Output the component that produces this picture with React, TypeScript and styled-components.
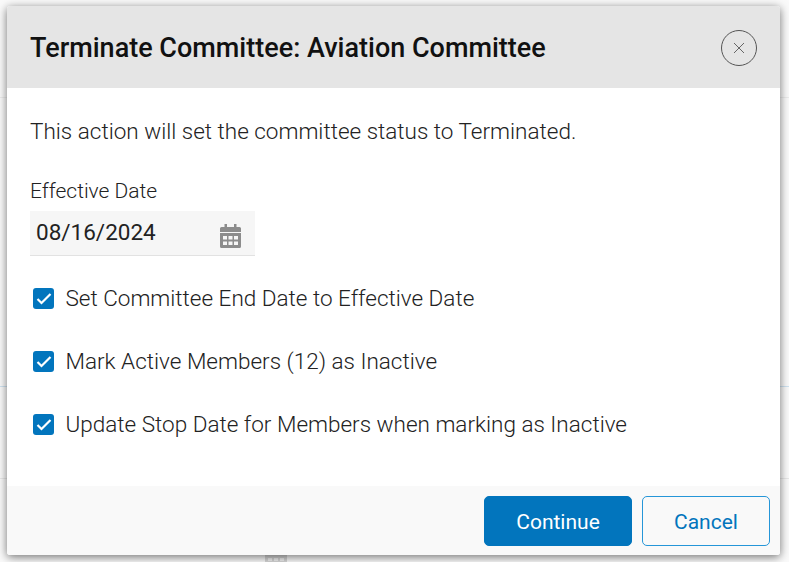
import React from "react";
import styled, { createGlobalStyle } from "styled-components";

const GlobalStyle = createGlobalStyle`
  html, body {
    margin: 0;
    padding: 0;
    width: 789px;
    height: 562px;
    overflow: hidden;
    background: #fafafa;
    font-family: Roboto, "Liberation Sans", sans-serif;
  }
`;

const Page = styled.div`
  position: relative;
  width: 789px;
  height: 562px;
  overflow: hidden;
  background: #fafafa;
`;

const Backdrop = styled.div`
  position: absolute;
  inset: 0;
`;

const BackdropLine = styled.div<{ $top: number; $color: string }>`
  position: absolute;
  left: 0;
  right: 0;
  top: ${({ $top }) => $top}px;
  height: 1px;
  background: ${({ $color }) => $color};
`;

const BackdropGlyph = styled.svg`
  position: absolute;
  left: 265px;
  top: 555px;
`;

const Modal = styled.div`
  position: absolute;
  left: 7px;
  top: 6px;
  width: 773px;
  height: 549px;
  display: flex;
  flex-direction: column;
  background: #fff;
  border-radius: 3px;
  overflow: hidden;
  box-shadow: 0 2px 10px rgba(0, 0, 0, 0.55);
`;

const Header = styled.header`
  flex: 0 0 82px;
  box-sizing: border-box;
  display: flex;
  align-items: center;
  justify-content: space-between;
  padding: 2px 23px 0;
  background: #e5e5e5;
`;

const Title = styled.h1`
  margin: 0;
  font-size: 27px;
  line-height: 32px;
  font-weight: 500;
  color: #111;
`;

const CloseButton = styled.button`
  width: 36px;
  height: 36px;
  padding: 0;
  display: flex;
  align-items: center;
  justify-content: center;
  background: transparent;
  border: 1px solid #555;
  border-radius: 50%;
  color: #555;
`;

const Body = styled.div`
  flex: 1;
  display: flex;
  flex-direction: column;
  padding: 28px 23px 0;
`;

const Intro = styled.p`
  margin: 0;
  font-size: 22.5px;
  line-height: 30px;
  font-weight: 300;
  color: #222;
`;

const Label = styled.label`
  margin-top: 32px;
  font-size: 21px;
  line-height: 26px;
  font-weight: 300;
  color: #222;
`;

const DateField = styled.div`
  margin-top: 7px;
  width: 225px;
  height: 45px;
  box-sizing: border-box;
  display: flex;
  align-items: center;
  justify-content: space-between;
  padding: 0 14px 0 6px;
  background: #f6f6f6;
  border-bottom: 1px solid #e2e2e2;
`;

const DateValue = styled.span`
  font-size: 22.5px;
  line-height: 40px;
  margin-bottom: 2px;
  font-weight: 400;
  color: #222;
`;

const CalendarSvg = styled.svg`
  margin-top: 5px;
`;

const CheckList = styled.div`
  margin-top: 27px;
  display: flex;
  flex-direction: column;
  gap: 33px;
`;

const CheckRow = styled.div`
  display: flex;
  align-items: center;
  height: 30px;
  gap: 12px;
  padding-left: 3px;
`;

const CheckBox = styled.span`
  flex: 0 0 21px;
  width: 21px;
  height: 21px;
  display: flex;
  align-items: center;
  justify-content: center;
  background: #0275bd;
  border-radius: 3px;
`;

const CheckText = styled.span`
  font-size: 22.5px;
  line-height: 30px;
  font-weight: 300;
  color: #222;
  margin-left: -0.5px;
`;

const Footer = styled.footer`
  flex: 0 0 69px;
  display: flex;
  justify-content: flex-end;
  gap: 10px;
  padding: 10px 10px 0 0;
  box-sizing: border-box;
  background: #f9f9f9;
`;

const ActionButton = styled.button<{ $primary?: boolean }>`
  width: ${({ $primary }) => ($primary ? "148px" : "128px")};
  height: 50px;
  box-sizing: border-box;
  padding: 2px 0 0;
  font-family: inherit;
  font-size: 21px;
  font-weight: 400;
  border-radius: 5px;
  color: ${({ $primary }) => ($primary ? "#fff" : "#0275bd")};
  background: ${({ $primary }) => ($primary ? "#0275bd" : "transparent")};
  border: 1px solid ${({ $primary }) => ($primary ? "#0275bd" : "#2596d8")};
`;

const CHECK_ITEMS = [
  "Set Committee End Date to Effective Date",
  "Mark Active Members (12) as Inactive",
  "Update Stop Date for Members when marking as Inactive",
];

const CalendarIcon = () => (
  <CalendarSvg width="21" height="24" viewBox="0 0 21 24">
    <path
      fill="#8c8c8c"
      d="M4.500 0H7v3h7V0h2.500v3H19.500A1.500 1.500 0 0 1 21 4.500V8H0V4.500A1.500 1.500 0 0 1 1.500 3H4.500zM0 9h21v13.500a1.500 1.500 0 0 1-1.500 1.500h-18A1.500 1.500 0 0 1 0 22.500z"
    />
    <path
      fill="#f6f6f6"
      d="M3 12h4v3.500H3zM8.500 12h4v3.500h-4zM14 12h4v3.500h-4zM3 17.500h4V21H3zM8.500 17.500h4V21h-4zM14 17.500h4V21h-4z"
    />
  </CalendarSvg>
);

const App = () => (
  <Page>
    <GlobalStyle />
    <Backdrop>
      <BackdropLine $top={97} $color="#ececec" />
      <BackdropLine $top={386} $color="#cfe3f1" />
      <BackdropLine $top={478} $color="#e8e8e8" />
      <BackdropGlyph width="22" height="7" viewBox="0 0 22 7">
        <path fill="#d6d6d6" d="M0 0h22v7H0z" />
        <path fill="#f0f0f0" d="M3 3h4v3H3zM9 3h4v3H9zM15 3h4v3h-4z" />
      </BackdropGlyph>
    </Backdrop>
    <Modal>
      <Header>
        <Title>Terminate Committee: Aviation Committee</Title>
        <CloseButton aria-label="Close">
          <svg width="12" height="12" viewBox="0 0 12 12">
            <path d="M1 1l10 10M11 1L1 11" stroke="#666" strokeWidth="1" fill="none" />
          </svg>
        </CloseButton>
      </Header>
      <Body>
        <Intro>This action will set the committee status to Terminated.</Intro>
        <Label>Effective Date</Label>
        <DateField>
          <DateValue>08/16/2024</DateValue>
          <CalendarIcon />
        </DateField>
        <CheckList>
          {CHECK_ITEMS.map(item => (
            <CheckRow key={item}>
              <CheckBox>
                <svg width="16" height="13" viewBox="0 0 16 13">
                  <path d="M1.500 7l4 4L14.500 2" stroke="#fff" strokeWidth="2.200" fill="none" />
                </svg>
              </CheckBox>
              <CheckText>{item}</CheckText>
            </CheckRow>
          ))}
        </CheckList>
      </Body>
      <Footer>
        <ActionButton $primary>Continue</ActionButton>
        <ActionButton>Cancel</ActionButton>
      </Footer>
    </Modal>
  </Page>
);

export default App;
